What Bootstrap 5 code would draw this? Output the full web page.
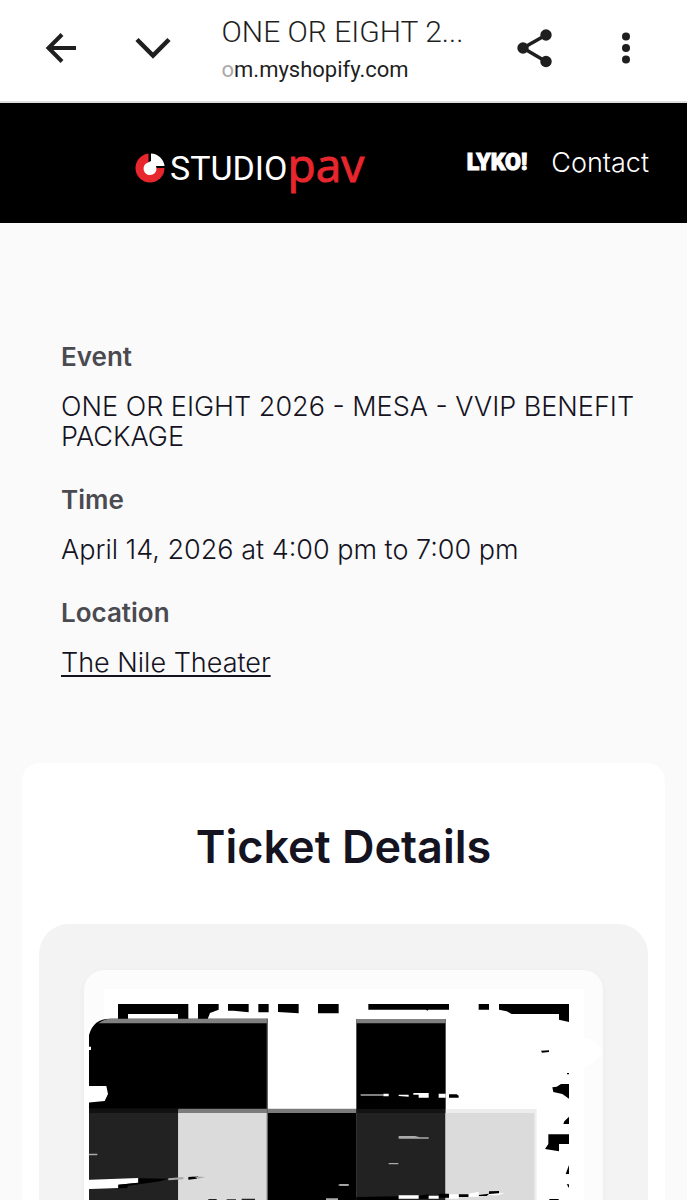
<!DOCTYPE html>
<html lang="en">
<head>
<meta charset="utf-8">
<meta name="viewport" content="width=device-width, initial-scale=1">
<title>ONE OR EIGHT 2026 - MESA - VVIP BENEFIT PACKAGE</title>
<link rel="stylesheet" href="https://cdn.jsdelivr.net/npm/bootstrap@5.3.0/dist/css/bootstrap.min.css">
<style>
body { font-family: Inter, sans-serif; font-size: 27px; font-weight: 350; line-height: 30px; color: #14131f; background: #fafafa; }
.browser-bar { height: 103px; background: #fff; border-bottom: 2px solid #dcdee0; padding: 0 39px 6px; color: #1f1f1f; }
.tool { width: 44px; height: 44px; padding: 0; border: 0; background: none; color: inherit; flex: none; }
.page-id { width: 244px; padding-top: 7px; font-family: Roboto, sans-serif; }
.page-title { font-size: 30px; line-height: 38px; font-weight: 350; }
.page-host { font-size: 22px; line-height: 38px; font-weight: 400; }
.fade-start { color: #aaa; }
.site-bar { height: 120px; background: #000; padding: 0 38px 0 134px; }
.site-bar a { color: #fff; text-decoration: none; }
.brand { padding-top: 10px; }
.brand-studio { font: 400 34px/44px Roboto, sans-serif; }
.brand-pav { font: 400 46px/44px "Open Sans", sans-serif; color: #e8262d; -webkit-text-stroke: 1px #e8262d; padding-bottom: 8px; }
.lyko { font: 900 23px/40px Roboto, sans-serif; -webkit-text-stroke: 1px #fff; }
.event-info { padding: 119px 40px 85px 61px; }
.event-info dt { font-size: 26px; color: #4a4a50; font-weight: 600; margin-bottom: 20px; }
.event-info dd { margin-bottom: 33px; }
.event-info dd:last-child { margin-bottom: 0; }
.event-info a { color: inherit; text-decoration-thickness: 2px; text-underline-offset: 3px; }
.ticket-panel { background: #fff; border-radius: 18px 18px 0 0; margin: 0 22px; padding: 56px 17px 0; }
.ticket-panel h2 { font-size: 45px; line-height: 56px; font-weight: 600; margin-bottom: 49px; }
.code-frame { background: #f3f3f3; border-radius: 30px 30px 0 0; padding: 46px 45px 0; }
.code-card { background: #fcfcfc; border-radius: 20px 20px 0 0; box-shadow: 0 2px 6px #0000000a; }
</style>
<script src="https://cdn.jsdelivr.net/npm/bootstrap@5.3.0/dist/js/bootstrap.bundle.min.js"></script>
</head>
<body>
<header class="browser-bar d-flex align-items-center justify-content-between">
  <div class="d-flex gap-5">
    <button class="tool" type="button" aria-label="Back"><svg width="44" height="44" fill="none" stroke="currentColor" stroke-width="4"><path d="M37 22H10M23 8.500L9.500 22 23 35.500"/></svg></button>
    <button class="tool" type="button" aria-label="Expand"><svg width="44" height="44" fill="none" stroke="currentColor" stroke-width="4.500"><path d="M6 13.500L22 29.500 38 13.500"/></svg></button>
  </div>
  <div class="page-id text-nowrap">
    <div class="page-title">ONE OR EIGHT 2...</div>
    <div class="page-host"><span class="fade-start">o</span>m.myshopify.com</div>
  </div>
  <div class="d-flex gap-5">
    <button class="tool" type="button" aria-label="Share"><svg width="44" height="44" fill="currentColor"><path d="M34 9L11 22 34 35.500" fill="none" stroke="currentColor" stroke-width="3.500"/><circle cx="34" cy="9" r="5.700"/><circle cx="11" cy="22" r="5.700"/><circle cx="34" cy="35.500" r="5.700"/></svg></button>
    <button class="tool" type="button" aria-label="More options"><svg width="44" height="44" fill="currentColor"><circle cx="22" cy="10.500" r="4"/><circle cx="22" cy="22" r="4"/><circle cx="22" cy="33.500" r="4"/></svg></button>
  </div>
</header>
<nav class="site-bar d-flex align-items-center justify-content-between">
  <a href="#" class="brand d-flex align-items-center gap-1">
    <svg width="32" height="32"><circle cx="16" cy="16" r="14.500" fill="#e8262d"/><path d="M14.500 0h18v16h-18z"/><path d="M17 1.500A14 14 0 0 1 30.500 14H22A6.500 6.500 0 1 1 12 11.500L17 9z" fill="#fff"/></svg>
    <span class="d-flex align-items-center"><span class="brand-studio">STUDIO</span><span class="brand-pav">pav</span></span>
  </a>
  <div class="d-flex align-items-center gap-4">
    <a href="#" class="lyko">LYKO!</a>
    <a href="#">Contact</a>
  </div>
</nav>
<main>
  <dl class="event-info mb-0">
    <dt>Event</dt><dd>ONE OR EIGHT 2026 - MESA - VVIP BENEFIT PACKAGE</dd>
    <dt>Time</dt><dd>April 14, 2026 at 4:00 pm to 7:00 pm</dd>
    <dt>Location</dt><dd><a href="#">The Nile Theater</a></dd>
  </dl>
  <section class="ticket-panel">
    <h2 class="text-center">Ticket Details</h2>
    <div class="code-frame">
      <div class="code-card overflow-hidden">
        <svg class="d-block w-100" viewBox="0 0 1557 690" role="img" aria-label="Ticket code">
          <path d="M60 57H1500V690H60z" fill="#fff"/>
          <!-- left half of the code -->
          <g transform="translate(-192 -180)">
            <path d="M192 620V400Q200 326 270 326H980V870H192z" fill="#fff"/>
            <path d="M294 282H505V327H474V312H324V327H294zM534 282H596V299L570 309 563 327H534zM624 282H686V307L640 302H624zM715 282H746V307H715zM774 282H836V310L774 306zM894 282H956V310H894z"/>
            <path d="M207 600V375Q220 326 270 326H743V600z"/>
            <path d="M236 340Q250 326 275 326H743V340z" fill="#808080"/>
            <path d="M207 596H475V870H207z" fill="#222"/>
            <path d="M207 596H475V609H207z" fill="#111"/>
            <path d="M475 609H742V870H475z" fill="#dbdbdb"/>
            <path d="M743 609H1010V870H743z"/>
            <path d="M475 596H1010V609H475z" fill="#7b7b7b"/>
            <path d="M740 326H744V870H740z" fill="#666"/>
            <path d="M192 528H259L264 552 254 573 192 579zM204 410H213V420H204zM192 810L355 804V818L295 824V834L192 838z" fill="#fff"/>
            <path d="M295 824L355 818V805L445 806 420 814 325 827 320 835H295zM505 801L535 799 530 806 505 809z"/>
            <path d="M445 805L490 801V808L445 811zM207 731H232V736H207zM956 823H985V827H956zM918 865H954V870H918zM520 799L556 801 535 806z" fill="#aaa"/>
            <path d="M565 867H590V870H565zM620 868H648V870H620zM665 866H705V870H665z" fill="#222"/>
          </g>
          <!-- right half of the code -->
          <g transform="translate(768 -180)">
            <path d="M680 390Q770 370 785 425 770 470 690 480z" fill="#fff"/>
            <path d="M85 282H327V299H265L262 302 258 299H85zM416 282H447V299H416zM477 282H687V336L657 329V312H515L500 304 477 299z"/>
            <path d="M49 327H317V597H49z"/>
            <path d="M49 327H317V340H49z" fill="#808080"/>
            <path d="M49 597H317V870H49z" fill="#222"/>
            <path d="M49 597H317V609H49z" fill="#131313"/>
            <path d="M317 597H590V870H317z" fill="#ededed"/>
            <path d="M317 609H583V870H317z" fill="#dbdbdb"/>
            <path d="M0 822H26V827H0zM62 553H130V557H62zM146 759H175V763H146zM176 678H225L240 682H266V686H176z" fill="#aaa"/>
            <path d="M130 551H146V559H130zM176 554H206V560L176 558zM220 549H266V563H236V554H220zM296 551H317V563H296z" fill="#fff"/>
            <path d="M327 553H350L356 557V563H327z"/>
            <path d="M49 861L176 859V870H49zM236 857L266 853V866H236zM296 851H327V863H296zM356 853H386V861H356zM416 855L447 851V844L477 843V852L440 858H416z"/>
            <path d="M176 856H236V866H176zM266 857H296V866H266zM327 853H356V866H327zM386 851L416 845V861H386zM447 852L495 848 477 855 440 858z" fill="#fff"/>
            <path d="M603 422L627 421V426L606 428zM681 489H687V493H681zM637 532L650 530 663 522H687V566L667 552 640 546zM687 620V642H670L673 634zM625 673H687V702H657V724L615 717 625 702zM687 765V792H677zM680 823H687V834zM628 867H656V870H628z"/>
          </g>
        </svg>
      </div>
    </div>
  </section>
</main>
</body>
</html>
